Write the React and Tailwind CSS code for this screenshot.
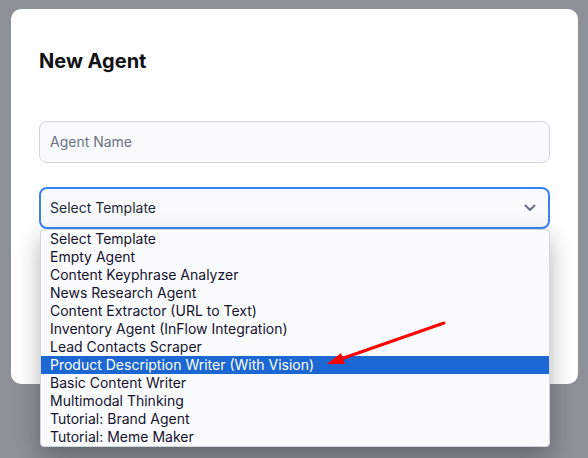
import { useState } from 'react'

const TEMPLATES = [
    'Select Template',
    'Empty Agent',
    'Content Keyphrase Analyzer',
    'News Research Agent',
    'Content Extractor (URL to Text)',
    'Inventory Agent (InFlow Integration)',
    'Lead Contacts Scraper',
    'Product Description Writer (With Vision)',
    'Basic Content Writer',
    'Multimodal Thinking',
    'Tutorial: Brand Agent',
    'Tutorial: Meme Maker',
]

const App = () => {
    const [hovered] = useState(7)

    return (
        <div
            className="relative w-[588px] h-[458px] overflow-hidden bg-[#8b9099] pt-[9px] pl-[11px]"
            style={{ fontFamily: 'Inter, "Noto Sans", sans-serif' }}
        >
            {/* Modal card */}
            <div className="w-[567px] h-[375px] bg-white rounded-[10px] pt-[38px] px-[28px]">
                <h2 className="text-xl leading-7 font-bold text-[#111111]">New Agent</h2>

                <div className="mt-[46px] h-[42px] flex items-center rounded-lg border border-gray-300 bg-gray-50 px-[10px]">
                    <span className="text-sm text-gray-500">Agent Name</span>
                </div>

                <div className="relative mt-[24px]">
                    <div className="h-[42px] flex items-center justify-between rounded-lg border-2 border-[#3b82f6] bg-gray-50 pl-[9px] pr-[12px]">
                        <span className="text-sm text-gray-800">Select Template</span>
                        <svg width="12" height="8" viewBox="0 0 12 8" fill="none" className="text-gray-500">
                            <path d="M1.5 1.5L6 6L10.5 1.5" stroke="currentColor" strokeWidth="2" strokeLinecap="round" strokeLinejoin="round" />
                        </svg>
                    </div>

                    {/* Native-looking dropdown list */}
                    <div className="absolute left-[1px] right-0 top-[42px] z-10 rounded-[4px] border border-gray-300 bg-[#fafbfc] shadow-[0_10px_24px_rgba(0,0,0,0.3)] overflow-hidden">
                        {TEMPLATES.map((t, i) => (
                            <div
                                key={t}
                                className={
                                    i === hovered
                                        ? 'h-[18px] pl-[9px] text-sm leading-[18px] bg-[#1b67d3] text-white'
                                        : 'h-[18px] pl-[9px] text-sm leading-[18px] text-[#16122e]'
                                }
                            >
                                {t}
                            </div>
                        ))}
                    </div>
                </div>
            </div>

            {/* Annotation arrow */}
            <svg className="absolute left-0 top-0 z-20 pointer-events-none" width="588" height="458">
                <line x1="444" y1="323" x2="338" y2="360" stroke="#ff0000" strokeWidth="3" strokeLinecap="round" />
                <polygon points="327,364 341,353 345,364" fill="#ff0000" />
            </svg>
        </div>
    )
}

export default App
